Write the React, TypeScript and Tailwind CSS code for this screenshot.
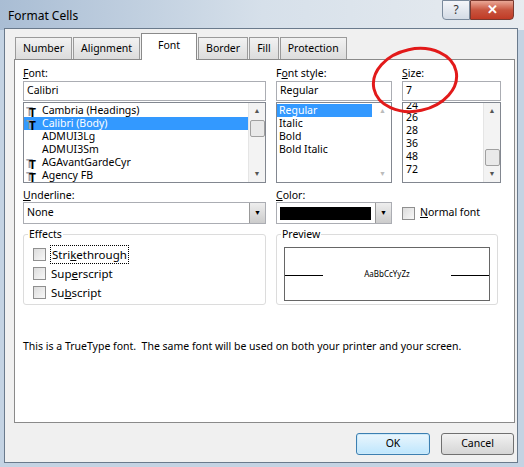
import React from 'react'

const F = "font-['Liberation_Sans',Arial,sans-serif]"

function TT() {
  return (
    <span className="relative inline-block w-[13px] h-[11px] mr-[3px] align-middle font-['Liberation_Serif',serif] text-[12px] leading-[11px] font-bold">
      <span className="absolute left-0 top-0 text-gray-400">T</span>
      <span className="absolute left-[3px] top-[1px]">T</span>
    </span>
  )
}

function ScrollBar({ thumbTop }: { thumbTop: number }) {
  return (
    <div className="w-[17px] bg-[#f3f3f3] border-l border-[#e5e5e5] relative flex flex-col justify-between items-center py-[3px] text-[#555] text-[7px]">
      <span>▲</span>
      <div className="absolute left-[1px] w-[15px] h-[17px] bg-[#e9e9e9] border border-[#a0a0a0] rounded-[2px]" style={{ top: thumbTop }} />
      <span>▼</span>
    </div>
  )
}

function Check({ label, u, focus }: { label: string; u: number; focus?: boolean }) {
  return (
    <div className="flex items-center h-[19px]">
      <span className="w-[13px] h-[13px] border border-[#8f8f8f] bg-gradient-to-br from-[#dcdcdc] to-[#f8f8f8] mr-[4px]" />
      <span className={focus ? 'border border-dotted border-black px-[1px]' : 'px-[1px]'}>
        {label.slice(0, u)}<u>{label[u]}</u>{label.slice(u + 1)}
      </span>
    </div>
  )
}

export default function App() {
  const tabs = ['Number', 'Alignment', 'Font', 'Border', 'Fill', 'Protection']
  return (
    <div className={`${F} w-[524px] h-[467px] text-[10.5px] text-black bg-[#c4d3e3] relative overflow-hidden`}>
      {/* title bar */}
      <div className="h-[30px] flex items-start justify-between bg-gradient-to-r from-[#a9bdd4] via-[#d6e0ea] to-[#e8ecf0]">
        <span className="text-[12px] ml-[8px] mt-[7px]">Format Cells</span>
        <div className="flex mr-[10px]">
          <div className="w-[28px] h-[20px] border border-[#7a8a9c] rounded-bl-[4px] bg-gradient-to-b from-[#f4f6f9] to-[#d3dbe5] flex items-center justify-center text-[12px] text-[#333]">?</div>
          <div className="w-[44px] h-[20px] border border-[#7a3a30] rounded-br-[4px] bg-gradient-to-b from-[#e9a796] via-[#c8553f] to-[#c03a25] flex items-center justify-center text-white font-bold text-[13px]">✕</div>
        </div>
      </div>
      <div className="absolute left-[4px] top-[28px] right-[6px] bottom-[4px] bg-[#f0f0f0] border border-[#6a7a8c]">
        {/* tabs */}
        <div className="flex items-end ml-[10px] mt-[3px] h-[27px]">
          {tabs.map((t) =>
            t === 'Font' ? (
              <div key={t} className="h-[27px] w-[56px] mr-[1px] bg-white border border-[#8a8a8a] border-b-0 -mb-[1px] relative z-10 flex items-center justify-center pb-[3px]">{t}</div>
            ) : (
              <div key={t} className="h-[22px] px-[7px] mr-[1px] border border-[#9a9a9a] border-b-0 bg-gradient-to-b from-[#f2f2f2] to-[#dcdcdc] flex items-center">{t}</div>
            )
          )}
        </div>
        {/* panel */}
        <div className="ml-[9px] mr-[2px] h-[364px] bg-white border border-[#8a8a8a] px-[8px] pt-[6px] relative">
          <div className="flex gap-[10px]">
            <div className="w-[243px]">
              <div className="h-[15px]"><u>F</u>ont:</div>
              <div className="h-[20px] border border-[#abadb3] px-[3px] flex items-center">Calibri</div>
              <div className="h-[81px] mt-[1px] border border-[#828790] flex">
                <div className="flex-1 pt-[1px] leading-[13px]">
                  <div className="px-[2px]"><TT />Cambria (Headings)</div>
                  <div className="px-[2px] bg-[#3399ff] text-white"><span className="text-black"><TT /></span>Calibri (Body)</div>
                  <div className="pl-[18px]">ADMUI3Lg</div>
                  <div className="pl-[18px]">ADMUI3Sm</div>
                  <div className="px-[2px]"><TT />AGAvantGardeCyr</div>
                  <div className="px-[2px]"><TT />Agency FB</div>
                </div>
                <ScrollBar thumbTop={17} />
              </div>
            </div>
            <div className="w-[116px]">
              <div className="h-[15px]">F<u>o</u>nt style:</div>
              <div className="h-[20px] border border-[#abadb3] px-[3px] flex items-center">Regular</div>
              <div className="h-[81px] mt-[1px] border border-[#828790] flex">
                <div className="flex-1 pt-[1px] leading-[13px]">
                  <div className="pl-[2px] mr-[2px] bg-[#3399ff] text-white">Regular</div>
                  <div className="pl-[2px]">Italic</div>
                  <div className="pl-[2px]">Bold</div>
                  <div className="pl-[2px]">Bold Italic</div>
                </div>
                <div className="w-[17px] flex flex-col justify-between items-center py-[3px] text-[#bbb] text-[7px]"><span>▲</span><span>▼</span></div>
              </div>
            </div>
            <div className="w-[99px]">
              <div className="h-[15px]"><u>S</u>ize:</div>
              <div className="h-[20px] border border-[#abadb3] px-[3px] flex items-center">7</div>
              <div className="h-[81px] mt-[1px] border border-[#828790] flex">
                <div className="flex-1 leading-[13px] pl-[3px]">
                  <div className="h-[8px] overflow-hidden leading-[4px]">24</div>
                  {['26', '28', '36', '48', '72'].map((s) => <div key={s}>{s}</div>)}
                </div>
                <ScrollBar thumbTop={46} />
              </div>
            </div>
          </div>

          <div className="flex gap-[10px] mt-[5px]">
            <div className="w-[243px]">
              <div className="h-[14px]"><u>U</u>nderline:</div>
              <div className="h-[22px] border border-[#abadb3] flex items-center">
                <span className="flex-1 px-[3px]">None</span>
                <span className="w-[16px] h-[20px] bg-gradient-to-b from-[#eee] to-[#ccc] border-l border-[#999] flex items-center justify-center text-[7px]">▼</span>
              </div>
            </div>
            <div className="w-[116px]">
              <div className="h-[14px]"><u>C</u>olor:</div>
              <div className="h-[22px] border border-[#abadb3] flex items-center pl-[3px]">
                <span className="flex-1 h-[13px] bg-black mr-[4px]" />
                <span className="w-[16px] h-[20px] bg-gradient-to-b from-[#eee] to-[#ccc] border-l border-[#999] flex items-center justify-center text-[7px]">▼</span>
              </div>
            </div>
            <div className="pt-[14px] flex items-center h-[36px]">
              <span className="w-[13px] h-[13px] border border-[#8f8f8f] bg-gradient-to-br from-[#dcdcdc] to-[#f8f8f8] mr-[5px]" />
              <span><u>N</u>ormal font</span>
            </div>
          </div>

          <div className="flex gap-[10px] mt-[10px]">
            <div className="w-[243px] h-[71px] border border-[#dcdcdc] rounded-[3px] relative pl-[9px] pt-[10px] text-[11.5px]">
              <span className="absolute -top-[8px] left-[4px] bg-white px-[1px] text-[10.5px]">Effects</span>
              <Check label="Strikethrough" u={4} focus />
              <Check label="Superscript" u={3} />
              <Check label="Subscript" u={2} />
            </div>
            <div className="w-[222px] h-[71px] border border-[#dcdcdc] rounded-[3px] relative px-[7px] pt-[12px]">
              <span className="absolute -top-[8px] left-[4px] bg-white px-[1px]">Preview</span>
              <div className="h-[54px] border border-[#666] flex items-center">
                <span className="w-[38px] h-[1px] bg-black mt-[2px]" />
                <span className="flex-1 text-center text-[8px]">AaBbCcYyZz</span>
                <span className="w-[38px] h-[1px] bg-black mt-[2px]" />
              </div>
            </div>
          </div>

          <div className="mt-[34px]">This is a TrueType font.&nbsp; The same font will be used on both your printer and your screen.</div>
        </div>
        {/* buttons */}
        <div className="flex justify-end gap-[11px] mr-[3px] mt-[10px]">
          <div className="w-[74px] h-[22px] border border-[#3c7fb1] rounded-[3px] bg-gradient-to-b from-[#eaf6fd] to-[#bee6fd] flex items-center justify-center shadow-[inset_0_0_0_1px_#cde9f9]">OK</div>
          <div className="w-[73px] h-[22px] border border-[#707070] rounded-[3px] bg-gradient-to-b from-[#f2f2f2] to-[#d5d5d5] flex items-center justify-center">Cancel</div>
        </div>
      </div>
      {/* red annotation circle */}
      <svg className="absolute left-[370px] top-[44px]" width="92" height="74">
        <ellipse cx="45" cy="36" rx="42" ry="31" fill="none" stroke="#e21a1a" strokeWidth="3" transform="rotate(-12 45 36)" />
      </svg>
    </div>
  )
}
